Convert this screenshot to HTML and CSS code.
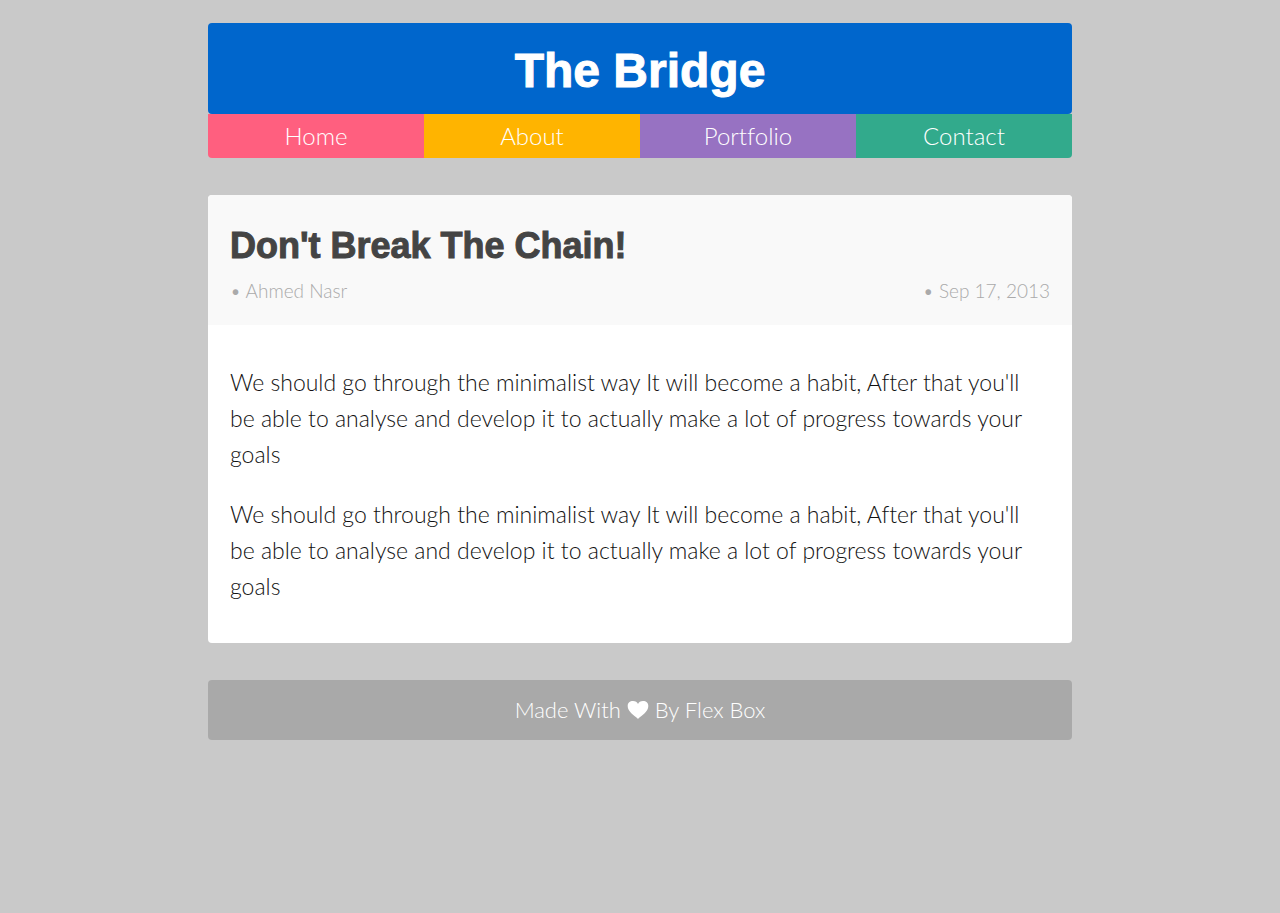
FILE: index.html
```html
<!DOCTYPE html>
<html lang="en">
<head>
<meta charset="utf-8">
<meta name="viewport" content="width=device-width, initial-scale=1">
<title>The Bridge</title>
<link rel="stylesheet" href="styles.css">
</head>
<body>
<div class="page">
  <header class="banner"><h1 class="banner-title">The Bridge</h1></header>
  <nav class="nav">
    <a class="nav-link nav-home" href="#">Home</a>
    <a class="nav-link nav-about" href="#">About</a>
    <a class="nav-link nav-portfolio" href="#">Portfolio</a>
    <a class="nav-link nav-contact" href="#">Contact</a>
  </nav>
  <article class="post">
    <header class="post-header">
      <h2 class="post-title">Don't Break The Chain!</h2>
      <div class="post-meta"><span>• Ahmed Nasr</span><span>• Sep 17, 2013</span></div>
    </header>
    <div class="post-body">
      <p>We should go through the minimalist way It will become a habit, After that you'll be able to analyse and develop it to actually make a lot of progress towards your goals</p>
      <p>We should go through the minimalist way It will become a habit, After that you'll be able to analyse and develop it to actually make a lot of progress towards your goals</p>
    </div>
  </article>
  <footer class="footer">Made With <svg class="heart" viewBox="0 0 22 20" role="img" aria-label="love"><path d="M11 19C9 16.500 3 13.500 1.300 9C-.5 4 2 1 6 1C8.500 1 10.200 2.200 11 4C11.800 2.200 13.500 1 16 1C20 1 22.500 4 20.700 9C19 13.500 13 16.500 11 19Z"/></svg> By Flex Box</footer>
</div>
</body>
</html>
```
FILE: styles.css
```css
* { box-sizing: border-box; }
body {
  margin: 0;
  background: #c9c9c9;
  color: #111;
  font-family: Lato, sans-serif;
  font-size: 24px;
  font-weight: 300;
  line-height: 36px;
  font-variant-ligatures: none;
}
.page { max-width: 864px; margin: 23px auto; }
.banner { background: #0066cc; border-radius: 4px; padding: 12px 24px 7px; }
.banner-title {
  margin: 0;
  color: #fff;
  font: bold 48px/72px "Liberation Sans", sans-serif;
  text-align: center;
  -webkit-text-stroke: 1px;
}
.nav { display: flex; }
.nav-link { flex: 1; padding: 4px 0; color: #fff; text-align: center; text-decoration: none; }
.nav-home { background: #ff5f7f; border-bottom-left-radius: 4px; }
.nav-about { background: #ffb400; }
.nav-portfolio { background: #9772c2; }
.nav-contact { background: #32aa8c; border-bottom-right-radius: 4px; }
.post { margin-top: 37px; background: #fff; border-radius: 4px; }
.post-header { padding: 24px 22px 16px; background: #f9f9f9; border-radius: 4px 4px 0 0; }
.post-title { margin: 0; color: #444; font: bold 36px/54px "Liberation Sans", sans-serif; -webkit-text-stroke: 1px; }
.post-meta { display: flex; justify-content: space-between; color: #aaa; font-size: 19px; }
.post-body { padding: 39px 32px 39px 22px; font-size: 23px; }
.post-body p { margin: 0; }
.post-body p + p { margin-top: 24px; }
.footer {
  margin-top: 37px;
  padding: 12px 22px;
  background: #a9a9a9;
  border-radius: 4px;
  color: #fff;
  font-size: 22px;
  text-align: center;
}
.heart { width: 22px; height: 20px; fill: #fff; vertical-align: -2px; }
```
